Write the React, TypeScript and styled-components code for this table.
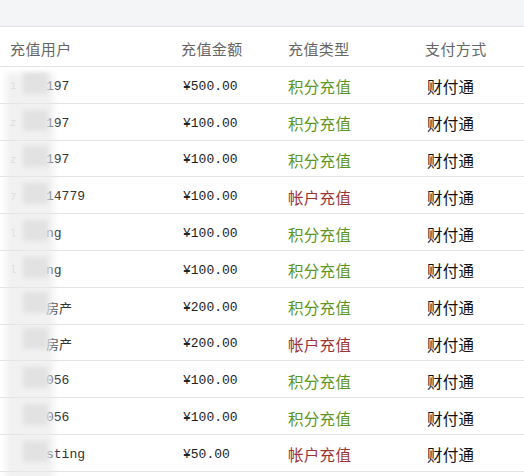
import React from "react";
import styled, { createGlobalStyle } from "styled-components";

const GlobalStyle = createGlobalStyle`
    html, body {
        margin: 0;
        padding: 0;
        background: #ffffff;
    }
    body {
        font-family: "Noto Sans CJK SC", "Noto Sans", sans-serif;
        width: 524px;
        height: 476px;
        overflow: hidden;
    }
`;

const Page = styled.div`
    display: flex;
    flex-direction: column;
    width: 524px;
    height: 476px;
    background: #ffffff;
`;

const TopBar = styled.div`
    height: 26px;
    background: #f4f5f7;
    border-bottom: 1px solid #e1e3e6;
`;

const Table = styled.div`
    position: relative;
    display: flex;
    flex-direction: column;
`;

const Row = styled.div<{ $head?: boolean }>`
    display: grid;
    grid-template-columns: 171px 107px 137px 1fr;
    align-items: center;
    box-sizing: border-box;
    padding-left: 10px;
    padding-top: 3px;
    height: ${(p) => (p.$head ? "40px" : "36.8px")};
    border-bottom: 1px solid #e3e3e3;
`;

const HeadCell = styled.div`
    font-size: 15px;
    color: #666666;
    letter-spacing: 0.4px;
`;

const NameCell = styled.div`
    position: relative;
    font-family: "Liberation Mono", "Noto Sans CJK SC", monospace;
    font-size: 13px;
    color: #333333;
    display: flex;
    align-items: center;
`;

const Lead = styled.span`
    color: #cfcfcf;
    width: 36px;
    font-size: 11px;
`;

const Smudge = styled.span`
    position: absolute;
    left: 13px;
    top: -6px;
    width: 25px;
    height: 21px;
    background: #dadada;
    filter: blur(2px);
`;

const Amount = styled.div`
    font-family: "Liberation Mono", monospace;
    font-size: 13px;
    color: #222222;
    padding-left: 2px;
`;

const TypeCell = styled.div<{ $kind: "score" | "account" }>`
    font-size: 15.5px;
    color: ${(p) => (p.$kind === "score" ? "#5c9622" : "#9c3434")};
    letter-spacing: 0.3px;
`;

const PayCell = styled.div`
    font-size: 15.5px;
    color: #111111;
    padding-left: 2px;
    letter-spacing: 0.2px;
`;

const Band = styled.div`
    position: absolute;
    left: 6px;
    top: 46px;
    width: 48px;
    height: 426px;
    border-radius: 0 0 22px 22px;
    background: rgba(232, 232, 232, 0.6);
    filter: blur(3px);
    pointer-events: none;
`;

type Record = {
    lead: string;
    tail: string;
    amount: string;
    kind: "score" | "account";
};

const records: Record[] = [
    { lead: "1", tail: "197", amount: "¥500.00", kind: "score" },
    { lead: "z", tail: "197", amount: "¥100.00", kind: "score" },
    { lead: "z", tail: "197", amount: "¥100.00", kind: "score" },
    { lead: "7", tail: "14779", amount: "¥100.00", kind: "account" },
    { lead: "l", tail: "ng", amount: "¥100.00", kind: "score" },
    { lead: "l", tail: "ng", amount: "¥100.00", kind: "score" },
    { lead: "", tail: "房产", amount: "¥200.00", kind: "score" },
    { lead: "", tail: "房产", amount: "¥200.00", kind: "account" },
    { lead: "", tail: "056", amount: "¥100.00", kind: "score" },
    { lead: "", tail: "056", amount: "¥100.00", kind: "score" },
    { lead: "", tail: "sting", amount: "¥50.00", kind: "account" },
];

const App: React.FC = () => {
    return (
        <Page>
            <GlobalStyle />
            <TopBar />
            <Table>
                <Row $head>
                    <HeadCell>充值用户</HeadCell>
                    <HeadCell>充值金额</HeadCell>
                    <HeadCell>充值类型</HeadCell>
                    <HeadCell>支付方式</HeadCell>
                </Row>
                {records.map((r, i) => (
                    <Row key={i}>
                        <NameCell>
                            <Lead>{r.lead}</Lead>
                            {r.tail}
                            <Smudge />
                        </NameCell>
                        <Amount>{r.amount}</Amount>
                        <TypeCell $kind={r.kind}>
                            {r.kind === "score" ? "积分充值" : "帐户充值"}
                        </TypeCell>
                        <PayCell>财付通</PayCell>
                    </Row>
                ))}
                <Band />
            </Table>
        </Page>
    );
};

export default App;
